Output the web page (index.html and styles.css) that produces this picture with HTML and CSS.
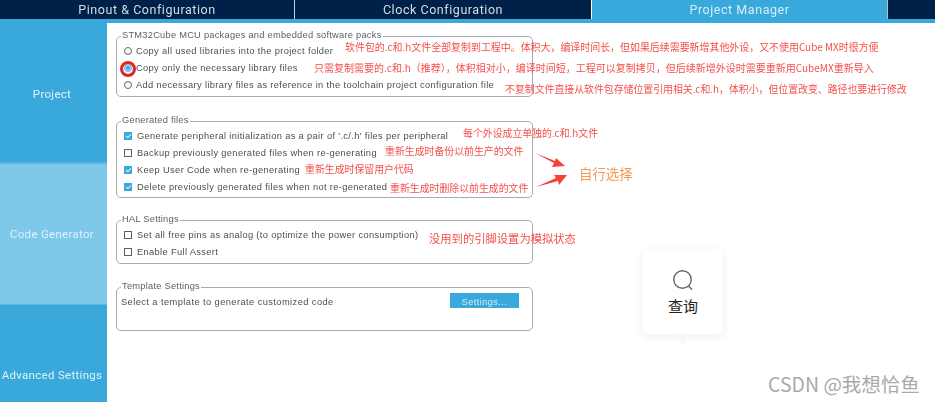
FILE: index.html
```html
<!DOCTYPE html>
<html lang="zh-CN">
<head>
<meta charset="utf-8">
<title>Project Manager</title>
<link rel="stylesheet" href="styles.css">
</head>
<body>
<div class="app">
  <nav class="tabs">
    <div class="tab tab-first">Pinout &amp; Configuration</div>
    <div class="tab tab-second">Clock Configuration</div>
    <div class="tab tab-active">Project Manager</div>
    <div class="tab tab-rest"></div>
  </nav>
  <div class="main">
    <aside class="side">
      <div class="side-item side-project">Project</div>
      <div class="side-item side-code">Code Generator</div>
      <div class="side-item side-adv">Advanced Settings</div>
    </aside>
    <section class="content">
      <fieldset class="group group-packs">
        <legend>STM32Cube MCU packages and embedded software packs</legend>
        <label class="row"><span class="radio"></span>Copy all used libraries into the project folder</label>
        <label class="row"><span class="radio radio-on"></span>Copy only the necessary library files</label>
        <label class="row"><span class="radio"></span>Add necessary library files as reference in the toolchain project configuration file</label>
      </fieldset>
      <fieldset class="group group-files">
        <legend>Generated files</legend>
        <label class="row"><span class="check check-on"></span>Generate peripheral initialization as a pair of '.c/.h' files per peripheral</label>
        <label class="row"><span class="check"></span>Backup previously generated files when re-generating</label>
        <label class="row"><span class="check check-on"></span>Keep User Code when re-generating</label>
        <label class="row"><span class="check check-on"></span>Delete previously generated files when not re-generated</label>
      </fieldset>
      <fieldset class="group group-hal">
        <legend>HAL Settings</legend>
        <label class="row"><span class="check"></span>Set all free pins as analog (to optimize the power consumption)</label>
        <label class="row"><span class="check"></span>Enable Full Assert</label>
      </fieldset>
      <fieldset class="group group-template">
        <legend>Template Settings</legend>
        <div class="template-row">
          <span class="template-text">Select a template to generate customized code</span>
          <button class="btn" type="button">Settings...</button>
        </div>
      </fieldset>
    </section>
  </div>

  <span class="note note-1">软件包的.c和.h文件全部复制到工程中。体积大，编译时间长，但如果后续需要新增其他外设，又不使用Cube MX时很方便</span>
  <span class="note note-2">只需复制需要的.c和.h（推荐），体积相对小，编译时间短，工程可以复制拷贝，但后续新增外设时需要重新用CubeMX重新导入</span>
  <span class="note note-3">不复制文件直接从软件包存储位置引用相关.c和.h，体积小，但位置改变、路径也要进行修改</span>
  <span class="note note-4">每个外设成立单独的.c和.h文件</span>
  <span class="note note-5">重新生成时备份以前生产的文件</span>
  <span class="note note-6">重新生成时保留用户代码</span>
  <span class="note note-7">重新生成时删除以前生成的文件</span>
  <span class="note note-8">没用到的引脚设置为模拟状态</span>
  <span class="note-orange">自行选择</span>
  <svg class="arrows" width="40" height="50" viewBox="0 0 40 50">
    <path d="M0 1 L20 9 L21 6 L30 14 L17 15 L19 11 Z" fill="#f4413c"/>
    <path d="M1 35 L21 26 L19 23 L32 23 L24 33 L23 29 Z" fill="#f4413c"/>
  </svg>
  <span class="ring"></span>
</div>

<div class="search-card">
  <svg class="search-icon" width="22" height="22" viewBox="0 0 22 22">
    <circle cx="10.5" cy="10.5" r="8.7" fill="none" stroke="#666" stroke-width="1.4"/>
    <path d="M16.5 17 L20 20.5" stroke="#666" stroke-width="1.5" fill="none"/>
  </svg>
  <span class="search-label">查询</span>
</div>
<div class="watermark">CSDN @我想恰鱼</div>
</body>
</html>
```
FILE: styles.css
```css
* { box-sizing: border-box; }
html, body { margin: 0; padding: 0; }
body {
  position: relative;
  width: 935px;
  height: 402px;
  overflow: hidden;
  background: #fff;
  font-family: "Liberation Sans", "Noto Sans CJK SC", sans-serif;
}
.app {
  position: relative;
  width: 935px;
  height: 402px;
  filter: blur(0.35px);
}

/* top tabs */
.tabs {
  display: flex;
  height: 23px;
  background: #002147;
  border-bottom: 4px solid #39a9dc;
}
.tab {
  display: flex;
  align-items: center;
  justify-content: center;
  height: 19px;
  padding-bottom: 1px;
  color: #d3dde6;
  font: 12.5px Roboto, sans-serif;
  letter-spacing: 0.55px;
}
.tab-first { width: 295px; border-right: 1px solid #c8d2dc; }
.tab-second { width: 296px; }
.tab-active { width: 296px; background: #39a9dc; color: #d5ecf7; border-left: 1px solid #fff; }
.tab-rest { flex: 1; border-left: 1px solid #b5c2cc; }

/* left column */
.main { display: flex; height: 379px; }
.side { width: 107px; flex: none; display: flex; flex-direction: column; background: #39a9dc; }
.side-item {
  display: flex;
  align-items: center;
  justify-content: center;
  padding-right: 3px;
  color: #dff1fa;
  font: 11.5px Roboto, sans-serif;
  letter-spacing: 0.3px;
  white-space: nowrap;
}
.side-project { height: 139px; padding-top: 2px; }
.side-code {
  height: 143px;
  background: #7ec8e9;
  border-top: 2px solid #5cb8e2;
  border-bottom: 1px solid #5cb8e2;
}
.side-adv { flex: 1; padding-top: 43px; }

/* main panel */
.content { flex: 1; padding: 7px 0 0 9px; }
.group {
  display: block;
  width: 417px;
  margin: 0;
  padding: 0 0 0 7px;
  border: 1px solid #a4abb3;
  border-radius: 5px;
  color: #4a4f55;
  font-size: 9.3px;
  letter-spacing: 0.35px;
}
.group legend {
  margin-left: -3px;
  padding: 0 1px;
  height: 12px;
  line-height: 11px;
  color: #5c6167;
  font-size: 9.3px;
  letter-spacing: 0.24px;
  white-space: nowrap;
}
.group-packs { height: 67px; }
.group-files { height: 83px; margin-top: 18px; }
.group-hal { height: 50px; margin-top: 16px; }
.group-template { height: 50px; margin-top: 17px; padding-left: 4px; }
.group-template legend { margin-left: 0; }

.row {
  display: flex;
  align-items: center;
  height: 17px;
  white-space: nowrap;
}
.radio {
  flex: none;
  width: 8px;
  height: 8px;
  margin-right: 4px;
  border: 1px solid #5f5f5f;
  border-radius: 50%;
  background: #fff;
}
.radio-on { background: #39a9dc; box-shadow: inset 0 0 0 1px #bfe2f3; border-color: #7fb4cf; }
.check {
  flex: none;
  position: relative;
  width: 8px;
  height: 8px;
  margin-right: 5px;
  border: 1px solid #5f5f5f;
  background: #fff;
}
.check-on { border-color: #39a9dc; background: #39a9dc; }
.check-on::after {
  content: "";
  position: absolute;
  left: 1.5px;
  top: 0;
  width: 2px;
  height: 4px;
  border-right: 1px solid #dff1fa;
  border-bottom: 1px solid #dff1fa;
  transform: rotate(45deg);
}
.template-row {
  display: flex;
  align-items: center;
  justify-content: space-between;
  height: 15px;
  padding-right: 13px;
}
.template-text { margin-top: 3px; letter-spacing: 0.42px; }
.btn {
  width: 69px;
  height: 15px;
  padding: 3px 0 0;
  border: 0;
  background: #39a9dc;
  color: #d7eef9;
  font: 9px "Liberation Sans", sans-serif;
  letter-spacing: 0.5px;
}

/* annotations drawn over the window */
.note {
  position: absolute;
  color: #f4504c;
  font: 9.9px/12px "Noto Sans CJK SC", "Liberation Sans", sans-serif;
  white-space: nowrap;
}
.note-1 { left: 345px; top: 41px; font-size: 9.95px; }
.note-2 { left: 314px; top: 62px; font-size: 10px; }
.note-3 { left: 505px; top: 83px; }
.note-4 { left: 463px; top: 127px; }
.note-5 { left: 385px; top: 145px; }
.note-6 { left: 305px; top: 163px; }
.note-7 { left: 390px; top: 182px; }
.note-8 { left: 429px; top: 232px; font-size: 11.3px; }
.note-orange {
  position: absolute;
  left: 579px;
  top: 164px;
  color: #f59a54;
  font: 13.4px/18px "Noto Sans CJK SC", sans-serif;
}
.arrows { position: absolute; left: 535px; top: 152px; }
.ring {
  position: absolute;
  left: 120px;
  top: 61px;
  width: 16px;
  height: 16px;
  border: 3px solid #e3242b;
  border-radius: 50%;
}

/* floating search card */
.search-card {
  position: absolute;
  left: 643px;
  top: 249px;
  width: 80px;
  height: 85px;
  display: flex;
  flex-direction: column;
  align-items: center;
  padding-top: 20px;
  background: #fff;
  border-radius: 2px;
  box-shadow: 0 2px 10px rgba(0, 0, 0, 0.07);
}
.search-card::after {
  content: "";
  position: absolute;
  left: 31px;
  bottom: -11px;
  width: 0;
  height: 0;
  border-left: 9px solid transparent;
  border-right: 9px solid transparent;
  border-top: 11px solid #f7f7f7;
}
.search-icon { display: block; }
.search-label {
  margin-top: 5px;
  color: #222;
  font: 15px/20px "Noto Sans CJK SC", sans-serif;
}
.watermark {
  position: absolute;
  left: 768px;
  top: 373px;
  color: #a9a9a9;
  font: 19.5px/22px "Noto Sans CJK SC", sans-serif;
  white-space: nowrap;
}
```
